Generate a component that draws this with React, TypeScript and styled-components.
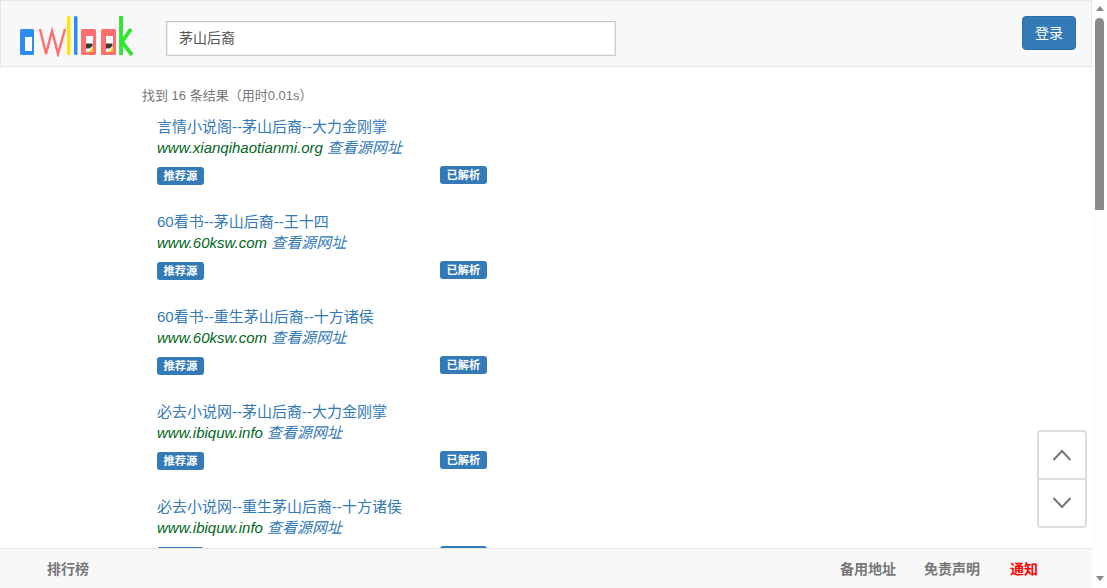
import { createGlobalStyle, styled } from 'styled-components';

const results = [
  { title: '言情小说阁--茅山后裔--大力金刚掌', host: 'www.xianqihaotianmi.org' },
  { title: '60看书--茅山后裔--王十四', host: 'www.60ksw.com' },
  { title: '60看书--重生茅山后裔--十方诸侯', host: 'www.60ksw.com' },
  { title: '必去小说网--茅山后裔--大力金刚掌', host: 'www.ibiquw.info' },
  { title: '必去小说网--重生茅山后裔--十方诸侯', host: 'www.ibiquw.info' },
];

const LogoO = ({ x }: { x: number }) => (
  <g transform={`translate(${x} 0)`}>
    <rect x="0" y="14" width="15" height="26" rx="1.500" fill="#ff6f6f" />
    <rect x="5" y="21" width="7" height="16" fill="#fff" />
    <path d="M5.500 37c3-.5 5.500-3 6.500-7.500V37z" fill="#f5d020" />
    <path d="M5 28.500h6.500v2.500l-3 2.500H5z" fill="#3a3a3a" />
  </g>
);

const Logo = () => (
  <svg width="120" height="42" viewBox="0 0 120 42">
    <rect x="1" y="14" width="14" height="26" rx="1.500" fill="#2d8cf0" />
    <rect x="6" y="22" width="7" height="14" fill="#fff" />
    <path d="M21 14l6 25 6-23 6 23 7-25" fill="none" stroke="#ff6f6f" strokeWidth="2.400" />
    <rect x="48" y="1" width="3.500" height="39" rx="1.500" fill="#ffe600" />
    <rect x="55" y="1" width="3.500" height="39" rx="1.500" fill="#2d8cf0" />
    <LogoO x={62} />
    <LogoO x={82} />
    <path d="M102 1v39M112 14l-9 13 10 13" fill="none" stroke="#2ee62e" strokeWidth="3.800" />
  </svg>
);

export default function App() {
  return (
    <>
      <GlobalStyle />
      <Page>
        <Main>
          <Navbar>
            <LogoLink href="#">
              <Logo />
            </LogoLink>
            <SearchInput defaultValue="茅山后裔" />
            <LoginButton>登录</LoginButton>
          </Navbar>
          <Content>
            <Summary>找到 16 条结果（用时0.01s）</Summary>
            {results.map((item) => (
              <ResultItem key={item.title}>
                <ResultTitle href="#">{item.title}</ResultTitle>
                <HostLine>
                  <Host>{item.host}</Host> <SourceLink href="#">查看源网址</SourceLink>
                </HostLine>
                <TagRow>
                  <Tag>推荐源</Tag>
                  <Tag $raised>已解析</Tag>
                </TagRow>
              </ResultItem>
            ))}
          </Content>
          <Footer>
            <FooterLink>排行榜</FooterLink>
            <FooterRight>
              <FooterLink>备用地址</FooterLink>
              <FooterLink>免责声明</FooterLink>
              <FooterLink $alert>通知</FooterLink>
            </FooterRight>
          </Footer>
          <ScrollButtons>
            <ScrollButton aria-label="top">
              <svg width="20" height="12" viewBox="0 0 20 12">
                <path d="M1.500 11L10 2l8.500 9" fill="none" stroke="#777" strokeWidth="2" />
              </svg>
            </ScrollButton>
            <ScrollButton aria-label="bottom">
              <svg width="20" height="12" viewBox="0 0 20 12">
                <path d="M1.500 1L10 10l8.500-9" fill="none" stroke="#777" strokeWidth="2" />
              </svg>
            </ScrollButton>
          </ScrollButtons>
        </Main>
        <Scrollbar>
          <ArrowUp />
          <Thumb />
          <ArrowDown />
        </Scrollbar>
      </Page>
    </>
  );
}

const GlobalStyle = createGlobalStyle`
  html, body {
    margin: 0;
    height: 100%;
    overflow: hidden;
  }
  body {
    font-family: "Liberation Sans", "Noto Sans CJK SC", sans-serif;
    font-size: 14px;
    color: #333;
    background: #fff;
  }
  * {
    box-sizing: border-box;
  }
`;

const Page = styled.div`
  display: flex;
  width: 100%;
  height: 100vh;
`;

const Main = styled.div`
  position: relative;
  display: flex;
  flex-direction: column;
  flex: 1;
  min-width: 0;
`;

const Navbar = styled.header`
  display: flex;
  align-items: flex-start;
  flex: none;
  height: 67px;
  padding: 14px 15px 0 18px;
  background: #f8f8f8;
  border: 1px solid #e7e7e7;
`;

const LogoLink = styled.a`
  display: flex;
  width: 147px;
  filter: blur(0.4px);
`;

const SearchInput = styled.input`
  width: 450px;
  height: 35px;
  margin-top: 6px;
  padding: 0 12px 3px;
  border: 1px solid #ccc;
  box-shadow: inset 0 0 0 1px #ededed;
  background: #fff;
  font: 14px "Liberation Sans", "Noto Sans CJK SC", sans-serif;
  color: #555;
  outline: none;
`;

const LoginButton = styled.button`
  margin: 1px 0 0 auto;
  width: 54px;
  height: 34px;
  padding: 0 0 3px;
  border: 1px solid #2e6da4;
  border-radius: 4px;
  background: #337ab7;
  color: #fff;
  font: 14px "Liberation Sans", "Noto Sans CJK SC", sans-serif;
`;

const Content = styled.main`
  flex: 1;
  min-height: 0;
  overflow: hidden;
  padding: 21px 0 0 142px;
`;

const Summary = styled.div`
  height: 20px;
  margin-bottom: 8px;
  line-height: 16px;
  font-size: 13px;
  color: #777;
`;

const ResultItem = styled.article`
  display: flex;
  flex-direction: column;
  width: 345px;
  height: 95px;
  padding-left: 15px;
`;

const ResultTitle = styled.a`
  height: 21px;
  line-height: 22px;
  font-size: 15px;
  color: #337ab7;
  text-decoration: none;
  white-space: nowrap;
`;

const HostLine = styled.div`
  height: 22px;
  line-height: 22px;
  font-size: 15px;
  font-style: italic;
  white-space: nowrap;
`;

const Host = styled.span`
  color: #006621;
`;

const SourceLink = styled.a`
  color: #337ab7;
  text-decoration: none;
`;

const TagRow = styled.div`
  display: flex;
  justify-content: space-between;
  margin-top: 8px;
`;

const Tag = styled.span<{ $raised?: boolean }>`
  width: 47px;
  height: 18px;
  margin-top: ${({ $raised }) => ($raised ? '-1px' : '0')};
  border-radius: 3px;
  background: #337ab7;
  color: #fff;
  font-size: 11.250px;
  font-weight: 700;
  line-height: 18px;
  text-align: center;
`;

const Footer = styled.footer`
  position: relative;
  z-index: 1;
  display: flex;
  align-items: center;
  justify-content: space-between;
  flex: none;
  height: 40px;
  padding: 0 54px 2px 47px;
  background: #f8f8f8;
  border-top: 1px solid #e7e7e7;
`;

const FooterRight = styled.nav`
  display: flex;
  gap: 28px;
`;

const FooterLink = styled.a<{ $alert?: boolean }>`
  margin-left: ${({ $alert }) => ($alert ? '2px' : '0')};
  font-size: 14px;
  font-weight: 700;
  color: ${({ $alert }) => ($alert ? '#ff0000' : '#777')};
`;

const ScrollButtons = styled.div`
  position: absolute;
  z-index: 2;
  right: 5px;
  top: 430px;
  display: flex;
  flex-direction: column;
  width: 50px;
  height: 98px;
  border: 2px solid #ddd;
  border-radius: 4px;
  background: #fff;
`;

const ScrollButton = styled.button`
  display: flex;
  align-items: center;
  justify-content: center;
  flex: 1;
  padding: 0;
  border: 0;
  background: transparent;

  & + & {
    border-top: 2px solid #ddd;
  }
`;

const Scrollbar = styled.div`
  display: flex;
  flex-direction: column;
  align-items: center;
  flex: none;
  width: 15px;
  background: #fdfdfd;
`;

const ArrowUp = styled.div`
  flex: none;
  margin-top: 6px;
  border-left: 4.500px solid transparent;
  border-right: 4.500px solid transparent;
  border-bottom: 5px solid #888;
`;

const ArrowDown = styled.div`
  flex: none;
  margin: auto 0 7px;
  border-left: 4.500px solid transparent;
  border-right: 4.500px solid transparent;
  border-top: 5px solid #888;
`;

const Thumb = styled.div`
  width: 9px;
  height: 192px;
  margin-top: 7px;
  border-radius: 5px 5px 0 0;
  background: #8a8a8a;
`;
